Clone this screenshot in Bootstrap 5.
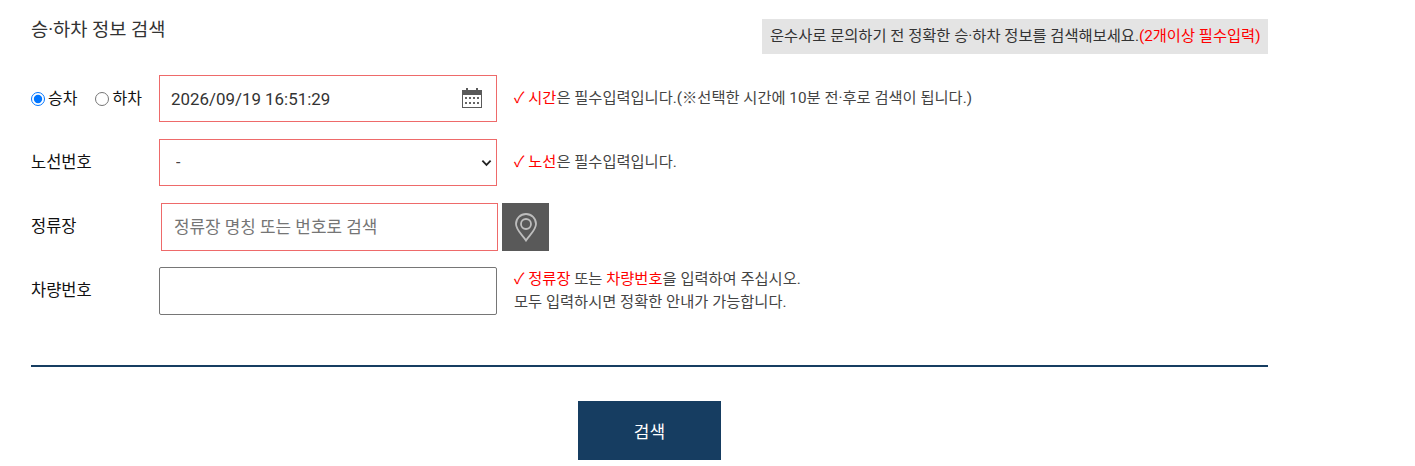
<!DOCTYPE html>
<html lang="ko">
<head>
<meta charset="utf-8">
<title>승·하차 정보 검색</title>
<link href="https://cdn.jsdelivr.net/npm/bootstrap@5.3.0/dist/css/bootstrap.min.css" rel="stylesheet">
<style>
html,body{background:#fff;overflow:hidden}
body{font-family:Roboto,"Noto Sans CJK KR",sans-serif;font-size:15px;color:#333}
.wrap{width:1237px;margin-left:31px}
.head-row{height:75px;padding-top:19px}
.title-txt{font-size:18.7px;font-weight:400;line-height:20px;margin:1px 0 0;color:#333}
.note-box{background:#e4e4e4;height:35px;line-height:35px;padding:0 8px;font-size:15.32px;color:#333;width:506px;white-space:nowrap}
.req{color:#f00}
.frm-row{height:48px;margin-bottom:16px}
.lbl-col{width:128px;flex:none;color:#111;font-size:16.5px;font-weight:400;align-self:center;margin-bottom:0}
.rad{width:14px;height:14px;margin:0 3px 0 0;appearance:auto;accent-color:#0075ff;flex:none}
.rad-l{display:inline-flex;align-items:center;color:#111;font-size:16px;margin-right:18px}
.fld{width:338px;height:47px;border:1px solid #ee6a6a;border-radius:0;font-size:16.9px;color:#333;padding:0 11px;background-color:#fff;flex:none}
.fld:focus{outline:0;box-shadow:none;border-color:#ee6a6a}
.fld::placeholder{color:#757575}
.date-box{position:relative;width:338px;flex:none}
.date-fld{padding-top:1px}
.cal-ico{position:absolute;right:15px;top:13px;width:20px;height:20px}
.sel-fld{padding-left:16px;color:#444;font-size:16px;padding-top:1px;background-image:url("data:image/svg+xml,%3csvg xmlns='http://www.w3.org/2000/svg' viewBox='0 0 12 8'%3e%3cpath fill='none' stroke='%23222' stroke-width='2' d='M1.500 1.500 6 6l4.500-4.500'/%3e%3c/svg%3e");background-position:right 4px center;background-size:11px 8px}
.stop-fld{margin-left:2px;height:48px;width:337px;padding-left:12px}
.car-fld{border-color:#767676;border-radius:2px;height:48px}
.pin-btn{width:47px;height:48px;background:#595959;border:0;margin-left:4px;border-radius:0;padding:0}
.msg{margin-left:17px;font-size:15.3px;line-height:23px;color:#444;white-space:nowrap;align-self:center;margin-bottom:1px}
.rule{border:0;border-top:2px solid #163d61;opacity:1;margin:50px 0 34px}
.go-btn{width:143px;height:59px;background:#163d61;border:0;border-radius:0;color:#fff;font-size:17px;padding-top:10px}
.go-btn:hover{background:#163d61;color:#fff}
</style>
</head>
<body>
<div class="wrap">
  <div class="head-row d-flex justify-content-between align-items-start">
    <h1 class="title-txt">승·하차 정보 검색</h1>
    <div class="note-box">운수사로 문의하기 전 정확한 승·하차 정보를 검색해보세요.<span class="req">(2개이상 필수입력)</span></div>
  </div>
  <form>
    <div class="frm-row d-flex align-items-start">
      <div class="lbl-col d-flex align-items-center">
        <label class="rad-l"><input class="rad" type="radio" name="t" checked>승차</label>
        <label class="rad-l m-0"><input class="rad" type="radio" name="t">하차</label>
      </div>
      <div class="date-box">
        <input class="form-control fld date-fld" type="text" value="2026/09/19 16:51:29">
        <svg class="cal-ico" viewBox="0 0 20 20" aria-hidden="true"><rect x="0.5" y="2.5" width="19" height="17" fill="#fff" stroke="#5a5a5a"/><rect x="0" y="2" width="20" height="5" fill="#5a5a5a"/><rect x="4" y="0" width="2" height="4" fill="#5a5a5a"/><rect x="14" y="0" width="2" height="4" fill="#5a5a5a"/><g fill="#666"><rect x="3" y="9" width="2" height="2"/><rect x="7" y="9" width="2" height="2"/><rect x="11" y="9" width="2" height="2"/><rect x="15" y="9" width="2" height="2"/><rect x="3" y="14" width="2" height="2"/><rect x="7" y="14" width="2" height="2"/><rect x="11" y="14" width="2" height="2"/><rect x="15" y="14" width="2" height="2"/></g></svg>
      </div>
      <div class="msg"><span class="req">✓ 시간</span>은 필수입력입니다.(※선택한 시간에 10분 전·후로 검색이 됩니다.)</div>
    </div>
    <div class="frm-row d-flex align-items-start">
      <label class="lbl-col">노선번호</label>
      <select class="form-select fld sel-fld"><option>-</option></select>
      <div class="msg"><span class="req">✓ 노선</span>은 필수입력입니다.</div>
    </div>
    <div class="frm-row d-flex align-items-start">
      <label class="lbl-col">정류장</label>
      <input class="form-control fld stop-fld" type="text" placeholder="정류장 명칭 또는 번호로 검색">
      <button class="btn pin-btn d-flex align-items-center justify-content-center" type="button" aria-label="정류장 지도">
        <svg width="22" height="29" viewBox="0 0 22 29" aria-hidden="true"><path d="M11 27.500C7.500 22 1 17 1 11a10 10 0 0 1 20 0C21 17 14.500 22 11 27.500Z" fill="none" stroke="#bdbdbd" stroke-width="1.800"/><circle cx="11" cy="11" r="5" fill="none" stroke="#bdbdbd" stroke-width="1.800"/></svg>
      </button>
    </div>
    <div class="frm-row d-flex align-items-start">
      <label class="lbl-col">차량번호</label>
      <input class="form-control fld car-fld" type="text">
      <div class="msg"><span class="req">✓ 정류장</span> 또는 <span class="req">차량번호</span>을 입력하여 주십시오.<br>모두 입력하시면 정확한 안내가 가능합니다.</div>
    </div>
    <hr class="rule">
    <div class="d-flex justify-content-center">
      <button class="btn go-btn" type="button">검색</button>
    </div>
  </form>
</div>
</body>
</html>
